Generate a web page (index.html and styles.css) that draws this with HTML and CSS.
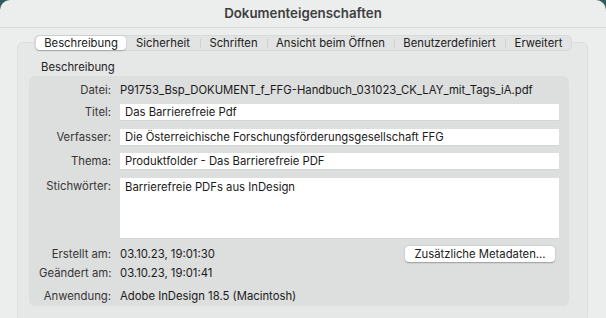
FILE: index.html
```html
<!DOCTYPE html>
<html lang="de">
<head>
<meta charset="utf-8">
<title>Dokumenteigenschaften</title>
<link rel="stylesheet" href="styles.css">
</head>
<body>
<div class="window">
  <div class="titlebar">Dokumenteigenschaften</div>
  <div class="tabs">
    <div class="seg selected">Beschreibung</div>
    <div class="seg">Sicherheit</div>
    <div class="seg sep">Schriften</div>
    <div class="seg sep">Ansicht beim Öffnen</div>
    <div class="seg sep">Benutzerdefiniert</div>
    <div class="seg sep">Erweitert</div>
  </div>
  <div class="panel">
    <div class="group-label">Beschreibung</div>
    <div class="box">
      <div class="row r-datei">
        <div class="label">Datei:</div>
        <div class="value">P91753_Bsp_DOKUMENT_f_FFG-Handbuch_031023_CK_LAY_mit_Tags_iA.pdf</div>
      </div>
      <div class="row r-titel">
        <div class="label">Titel:</div>
        <div class="field">Das Barrierefreie Pdf</div>
      </div>
      <div class="row r-verf">
        <div class="label">Verfasser:</div>
        <div class="field">Die Österreichische Forschungsförderungsgesellschaft FFG</div>
      </div>
      <div class="row r-thema">
        <div class="label">Thema:</div>
        <div class="field">Produktfolder - Das Barrierefreie PDF</div>
      </div>
      <div class="row r-stich top">
        <div class="label">Stichwörter:</div>
        <div class="field area">Barrierefreie PDFs aus InDesign</div>
      </div>
      <div class="row r-erst">
        <div class="label">Erstellt am:</div>
        <div class="value">03.10.23, 19:01:30</div>
        <button class="btn">Zusätzliche Metadaten...</button>
      </div>
      <div class="row r-geae">
        <div class="label">Geändert am:</div>
        <div class="value">03.10.23, 19:01:41</div>
      </div>
      <div class="row r-anw">
        <div class="label">Anwendung:</div>
        <div class="value">Adobe InDesign 18.5 (Macintosh)</div>
      </div>
    </div>
  </div>
</div>
</body>
</html>
```
FILE: styles.css
```css
* { box-sizing: border-box; }
html, body { margin: 0; padding: 0; }
body {
  width: 606px;
  height: 318px;
  overflow: hidden;
  background: #2f5d5e;
  font-family: Inter, "Liberation Sans", sans-serif;
  font-size: 11.3px;
  color: #1c1c1c;
}
.window {
  width: 606px;
  height: 318px;
  background: #eceeee;
  border-radius: 10px 10px 0 0;
  overflow: hidden;
}
.titlebar {
  height: 28px;
  border-bottom: 1px solid #d7d9d9;
  display: flex;
  align-items: center;
  justify-content: center;
  font-weight: 600;
  font-size: 13.3px;
  color: #3e3e3e;
  padding-bottom: 2px;
}
.tabs {
  position: relative;
  z-index: 1;
  margin: 7px 0 0 34px;
  width: 538px;
  height: 16px;
  padding: 0 1px;
  display: grid;
  grid-template-columns: 90px 74px 67px 127px 111px 67px;
  align-items: center;
  background: #e2e3e3;
  border: 1px solid #d8d9d9;
  border-radius: 5px;
}
.seg {
  position: relative;
  height: 14px;
  line-height: 14px;
  text-align: center;
  color: #202020;
  white-space: nowrap;
}
.seg.selected {
  background: #fff;
  border-radius: 4px;
  box-shadow: 0 0.5px 1.5px rgba(0,0,0,0.25);
}
.seg.sep::before {
  content: "";
  position: absolute;
  left: 0;
  top: 3px;
  height: 9px;
  width: 1px;
  background: #cfd0d0;
}
.panel {
  margin: -9px 0 0 17px;
  width: 571px;
  height: 280px;
  background: #e6e7e7;
  border: 1px solid #dcdddd;
  border-radius: 6px;
  padding: 17px 0 0 11px;
}
.group-label {
  height: 14px;
  line-height: 14px;
  margin-left: 12px;
  color: #242424;
}
.box {
  margin-top: 2px;
  width: 540px;
  height: 230px;
  background: #dddede;
  border-radius: 6px;
  padding: 7px 10px 0 10px;
}
.row {
  display: flex;
  align-items: center;
}
.row.top { align-items: flex-start; }
.label {
  width: 72px;
  flex: none;
  text-align: right;
  color: #363636;
  margin-right: 9px;
  line-height: 14px;
  white-space: nowrap;
}
.row.top .label { margin-top: 1px; }
.value {
  line-height: 14px;
  color: #1a1a1a;
  white-space: nowrap;
}
.field {
  flex: 1;
  height: 16px;
  line-height: 16px;
  background: #fff;
  padding-left: 5px;
  color: #1a1a1a;
  white-space: nowrap;
  box-shadow: 0 0.5px 0 rgba(0,0,0,0.08);
}
.field.area {
  height: 60px;
  padding-top: 1px;
}
.r-datei { height: 14px; }
.r-titel { margin-top: 7px; }
.r-verf { margin-top: 9px; }
.r-thema { margin-top: 8px; }
.r-stich { margin-top: 9px; }
.r-erst { margin-top: 8px; height: 16px; }
.r-geae { margin-top: 4px; height: 14px; }
.r-anw { margin-top: 9px; height: 14px; }
.btn {
  margin-left: auto;
  margin-right: 4px;
  width: 150px;
  height: 16px;
  padding: 0;
  border: none;
  border-radius: 4px;
  background: #fff;
  box-shadow: 0 0.5px 1.5px rgba(0,0,0,0.3);
  font-family: Inter, "Liberation Sans", sans-serif;
  font-size: 11.3px;
  color: #202020;
  line-height: 16px;
}
```
